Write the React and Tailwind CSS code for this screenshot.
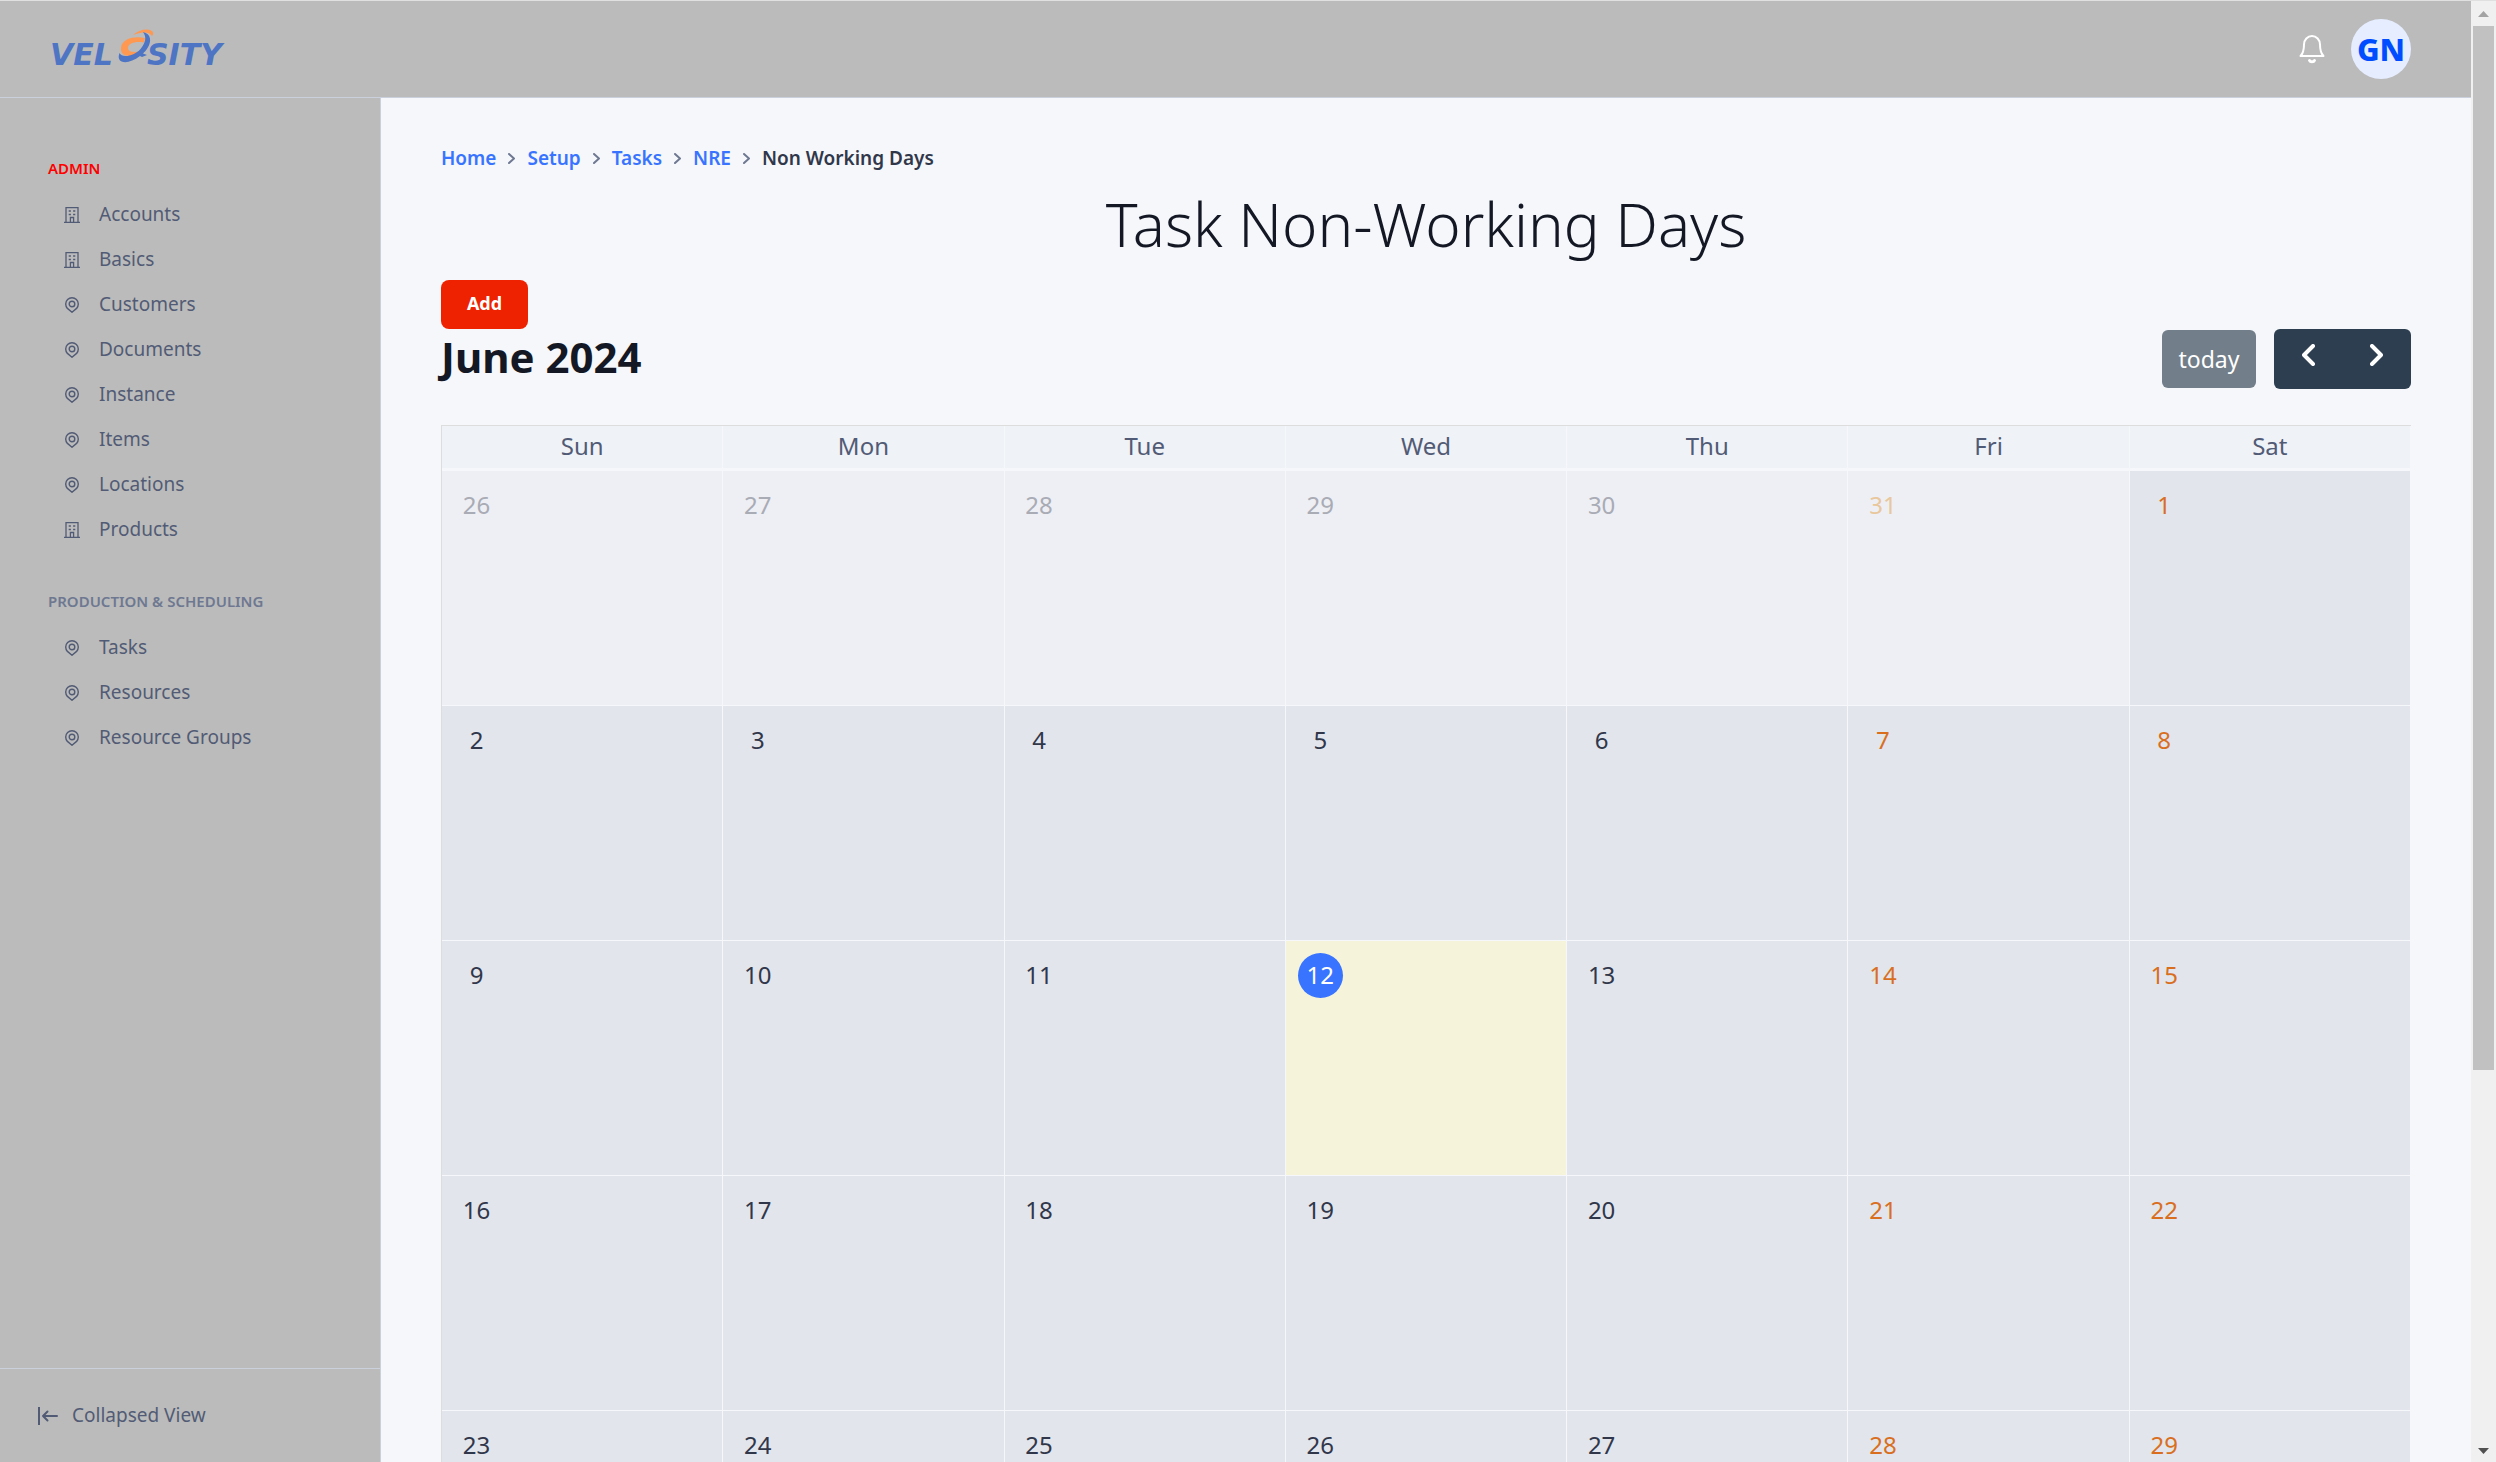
const adminLinks = [
  { name: "Accounts", icon: "building" },
  { name: "Basics", icon: "building" },
  { name: "Customers", icon: "pin" },
  { name: "Documents", icon: "pin" },
  { name: "Instance", icon: "pin" },
  { name: "Items", icon: "pin" },
  { name: "Locations", icon: "pin" },
  { name: "Products", icon: "building" },
];

const productionLinks = [
  { name: "Tasks", icon: "pin" },
  { name: "Resources", icon: "pin" },
  { name: "Resource Groups", icon: "pin" },
];

const crumbs = ["Home", "Setup", "Tasks", "NRE"];

const weekDays = ["Sun", "Mon", "Tue", "Wed", "Thu", "Fri", "Sat"];

const weeks = [
  [26, 27, 28, 29, 30, 31, 1],
  [2, 3, 4, 5, 6, 7, 8],
  [9, 10, 11, 12, 13, 14, 15],
  [16, 17, 18, 19, 20, 21, 22],
  [23, 24, 25, 26, 27, 28, 29],
];

const TODAY = 12;

function BuildingIcon() {
  return (
    <svg width="16" height="16" viewBox="0 0 16 16" fill="none" stroke="currentColor">
      <path d="M2 15V.7h12V15M0 15.3h16M6.4 15v-4.5h3.200V15" strokeWidth="1.3" />
      <path d="M4.700 4h2.200M9.100 4h2.200M4.700 7.500h2.200M9.100 7.500h2.200" strokeWidth="1.500" />
    </svg>
  );
}

function PinIcon() {
  return (
    <svg width="16" height="16" viewBox="0 0 16 16" fill="none" stroke="currentColor" strokeWidth="1.4">
      <path d="M8 15.2 3.400 11.400a6.300 6.300 0 1 1 9.200 0Z" strokeLinejoin="round" />
      <circle cx="8" cy="7" r="2.800" />
    </svg>
  );
}

function Chevron({ left, width, height, stroke }) {
  return (
    <svg width={width} height={height} viewBox={`0 0 ${width} ${height}`} fill="none" stroke="currentColor" strokeWidth={stroke} strokeLinecap="round" strokeLinejoin="round">
      <polyline
        points={
          left
            ? `${width - stroke / 2},${stroke / 2} ${stroke / 2},${height / 2} ${width - stroke / 2},${height - stroke / 2}`
            : `${stroke / 2},${stroke / 2} ${width - stroke / 2},${height / 2} ${stroke / 2},${height - stroke / 2}`
        }
      />
    </svg>
  );
}

function Logo() {
  return (
    <a href="#" aria-label="Velosity">
      <svg width="190" height="56" viewBox="0 0 190 56" fill="#4e74c4">
        <text x="2" y="44" fontFamily="DejaVu Sans" fontWeight="bold" fontStyle="italic" fontSize="30">VEL</text>
        <text x="99" y="44" fontFamily="DejaVu Sans" fontWeight="bold" fontStyle="italic" fontSize="30">SITY</text>
        <path d="M97 17c-10-2-23 0-24 10-.5 5 3 8 8 8 5 0 9-2 12-5-6 1.500-13 1.500-13-3 0-5 8-7 16-5.500Z" fill="#ff9850" />
        <path d="M85 14c6-6 18-7.500 20-2.500.4 1.300 0 2.500-1 3.500-3-4.500-10-4.500-19-1Z" fill="#ff9850" />
        <path d="M95 11c8 2 9 9 4.500 16-1.500 2.500-3 4-4.500 5.500l4 1.500-5 2-2-1c-8 6-16 8-20 4.500-1.800-2-1.500-5-.5-7.500 2 5 14 4 21-4 5-6 6.500-12 2.500-17Z" />
      </svg>
    </a>
  );
}

function BellIcon() {
  return (
    <svg width="26" height="30" viewBox="0 0 26 30" fill="none" stroke="currentColor" strokeWidth="2" strokeLinecap="round" strokeLinejoin="round">
      <path d="M1.500 22C4 19.500 5 16 5 10.500a8 8.500 0 0 1 16 0c0 5.500 1 9 3.500 11.500Z" />
      <path d="M10.500 26.500c.8 1.800 4.200 1.800 5 0" strokeWidth="3" />
    </svg>
  );
}

function NavSection({ title, titleClass, links }) {
  return (
    <div>
      <h2 className={`mb-3 text-[15px] leading-6 font-semibold uppercase ${titleClass}`}>{title}</h2>
      <ul>
        {links.map((link) => (
          <li key={link.name}>
            <a href="#" className="flex h-[45px] items-center gap-[19px] pl-4 text-[19px] text-[#525b75]">
              {link.icon === "building" ? <BuildingIcon /> : <PinIcon />}
              {link.name}
            </a>
          </li>
        ))}
      </ul>
    </div>
  );
}

function Sidebar() {
  return (
    <aside className="flex w-[381px] shrink-0 flex-col border-r border-[#cbd0dd] bg-[#bbbbbb]">
      <nav className="flex flex-1 flex-col gap-[37px] px-12 pt-[58px]">
        <NavSection title="Admin" titleClass="text-[#ff0000]" links={adminLinks} />
        <NavSection title="Production & Scheduling" titleClass="text-[#6e7891]" links={productionLinks} />
      </nav>
      <button className="flex h-[94px] items-center gap-[14px] border-t border-[#cbd0dd] pl-[38px] text-[19px] text-[#525b75]">
        <svg width="20" height="18" viewBox="0 0 20 18" fill="none" stroke="currentColor" strokeWidth="2">
          <path d="M1 0v18" />
          <path d="M19 9H5M9.500 4.500 5 9l4.500 4.500" strokeLinecap="round" strokeLinejoin="round" />
        </svg>
        Collapsed View
      </button>
    </aside>
  );
}

function Header() {
  return (
    <header className="flex h-[98px] shrink-0 items-center justify-between border-t border-b border-t-[#e0e0e0] border-b-[#cbd0dd] bg-[#bbbbbb] pr-[60px] pl-12">
      <Logo />
      <div className="flex items-center gap-[26px]">
        <button aria-label="Notifications" className="text-white">
          <BellIcon />
        </button>
        <button className="size-[60px] rounded-full bg-[#e5edff] text-[31px] font-extrabold text-[#004dff]">GN</button>
      </div>
    </header>
  );
}

function dayColor(day, weekIndex, dayIndex) {
  const otherMonth = weekIndex === 0 && day > 7;
  if (otherMonth) return dayIndex > 4 ? "text-[#e9c79c]" : "text-[#a9abb5]";
  if (dayIndex > 4) return "text-[#d96f1e]";
  return "text-[#31374a]";
}

function Calendar() {
  return (
    <table className="w-full table-fixed border-separate border-spacing-0 border-t border-l border-[#dddddd]">
      <thead>
        <tr>
          {weekDays.map((day) => (
            <th key={day} className="h-[45px] border-r border-b-3 border-[#f5f7fb] bg-[#eff2f7] p-0 pb-0.5 text-[24px] leading-8 font-normal text-[#525b75]">
              {day}
            </th>
          ))}
        </tr>
      </thead>
      <tbody>
        {weeks.map((week, w) => (
          <tr key={w}>
            {week.map((day, d) => {
              const otherMonth = w === 0 && day > 7;
              const isToday = w > 0 && day === TODAY;
              return (
                <td
                  key={d}
                  className={`h-[235px] border-r border-b border-[#f5f7fb] p-3 align-top ${
                    isToday ? "bg-[#f5f3da]" : otherMonth ? "bg-[#eeeff4]" : "bg-[#e2e5ec]"
                  }`}
                >
                  <a
                    href="#"
                    className={`flex size-[45px] items-center justify-center rounded-full pb-0.5 text-[24px] ${
                      isToday ? "bg-[#3874ff] text-white" : dayColor(day, w, d)
                    }`}
                  >
                    {day}
                  </a>
                </td>
              );
            })}
          </tr>
        ))}
      </tbody>
    </table>
  );
}

function Scrollbar() {
  return (
    <div className="flex w-[25px] shrink-0 flex-col items-center justify-between border-t border-[#e0e0e0] bg-[#f0f0f0]">
      <svg width="11" height="25" viewBox="0 0 11 25" fill="#a3a3a3">
        <path d="M0 16h11L5.500 10Z" />
      </svg>
      <div className="w-[21px] flex-1">
        <div className="h-[74%] bg-[#c1c1c1]" />
      </div>
      <svg width="11" height="25" viewBox="0 0 11 25" fill="#505050">
        <path d="M0 11h11L5.500 17Z" />
      </svg>
    </div>
  );
}

export default function App() {
  return (
    <div className="flex h-screen overflow-hidden bg-[#f5f7fb] font-['Noto_Sans',sans-serif]">
      <div className="flex min-w-0 flex-1 flex-col">
        <Header />
        <div className="flex min-h-0 flex-1">
          <Sidebar />
          <main className="min-w-0 flex-1 overflow-hidden px-[60px] pt-[46px]">
            <nav aria-label="Breadcrumb">
              <ol className="flex items-center gap-3 text-[19px] leading-7 font-semibold">
                {crumbs.map((crumb) => (
                  <li key={crumb} className="flex items-center gap-3 text-[#6e7891]">
                    <a href="#" className="text-[#3874ff]">{crumb}</a>
                    <Chevron width={7} height={11} stroke={2} />
                  </li>
                ))}
                <li className="text-[#31374a]">Non Working Days</li>
              </ol>
            </nav>
            <h1 className="mt-[14px] mb-[18px] text-center text-[60px] leading-[76px] font-light text-[#141824]">
              Task Non-Working Days
            </h1>
            <button className="flex h-[49px] w-[87px] items-center justify-center rounded-lg bg-[#ee2200] pb-0.5 text-[18px] font-bold text-white">
              Add
            </button>
            <div className="mb-9 flex h-[60px] items-center justify-between">
              <h2 className="pb-1 text-[42px] leading-[56px] font-bold text-[#141824]">June 2024</h2>
              <div className="flex items-center gap-[18px]">
                <button className="h-[58px] w-[94px] rounded-md bg-[#727e89] text-[23px] text-white">today</button>
                <div className="flex h-[60px] overflow-hidden rounded-md bg-[#2c3e50] text-white">
                  <button aria-label="Previous month" className="flex w-[68px] justify-center pt-[15px]">
                    <Chevron left width={13} height={22} stroke={4} />
                  </button>
                  <button aria-label="Next month" className="flex w-[69px] justify-center pt-[15px]">
                    <Chevron width={13} height={22} stroke={4} />
                  </button>
                </div>
              </div>
            </div>
            <Calendar />
          </main>
        </div>
      </div>
      <Scrollbar />
    </div>
  );
}
